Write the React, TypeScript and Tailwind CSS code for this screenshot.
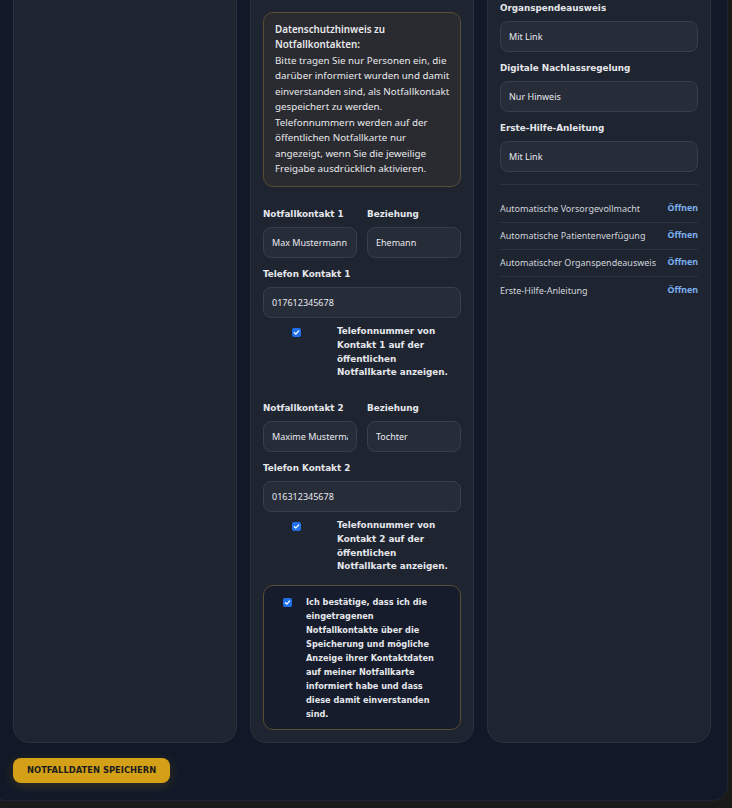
import React from "react";

const body = "font-['Noto_Sans',sans-serif]";
const dv = "font-['DejaVu_Sans',sans-serif]";

function Check() {
  return (
    <span className="flex h-[9px] w-[9px] shrink-0 items-center justify-center rounded-[2px] bg-[#1f6feb]">
      <svg width="7" height="7" viewBox="0 0 7 7">
        <path d="M1.3 3.7 L2.8 5.1 L5.7 1.9" stroke="#ffffff" strokeWidth="1.3" fill="none" strokeLinecap="round" strokeLinejoin="round" />
      </svg>
    </span>
  );
}

function Label({ children }: { children: React.ReactNode }) {
  return (
    <div className={`${dv} mb-[6px] h-[13px] whitespace-nowrap text-[8.8px] font-bold leading-[13px] text-[#e5e7eb]`}>
      {children}
    </div>
  );
}

function Input({ value }: { value: string }) {
  return (
    <input
      readOnly
      defaultValue={value}
      className={`${body} block h-[31px] w-full min-w-0 rounded-[8px] border border-[#383e4b] bg-[#272c39] px-[8px] text-[9px] text-[#e8eaee] outline-none`}
    />
  );
}

function Field({ label, value, className = "" }: { label: string; value: string; className?: string }) {
  return (
    <div className={className}>
      <Label>{label}</Label>
      <Input value={value} />
    </div>
  );
}

function PhoneConsent({ lines }: { lines: string[] }) {
  return (
    <div className="mt-[7px] flex items-start pl-[29px]">
      <div className="mt-[3px]">
        <Check />
      </div>
      <div className={`${dv} ml-[36px] text-[8.8px] font-bold leading-[13.7px] text-[#e5e7eb]`}>
        {lines.map((l, i) => (
          <div key={i} className="whitespace-nowrap">
            {l}
          </div>
        ))}
      </div>
    </div>
  );
}

function ContactSection({ n, name, rel, phone, className = "" }: { n: number; name: string; rel: string; phone: string; className?: string }) {
  return (
    <div className={className}>
      <div className="grid grid-cols-2 gap-[10px]">
        <Field label={`Notfallkontakt ${n}`} value={name} />
        <Field label="Beziehung" value={rel} />
      </div>
      <Field className="mt-[10px]" label={`Telefon Kontakt ${n}`} value={phone} />
      <PhoneConsent
        lines={["Telefonnummer von", `Kontakt ${n} auf der`, "öffentlichen", "Notfallkarte anzeigen."]}
      />
    </div>
  );
}

const card = "rounded-[16px] border border-[#2a303d] bg-[#1f2431] p-[12px]";

export default function App() {
  const noteLines = [
    "Bitte tragen Sie nur Personen ein, die",
    "darüber informiert wurden und damit",
    "einverstanden sind, als Notfallkontakt",
    "gespeichert zu werden.",
    "Telefonnummern werden auf der",
    "öffentlichen Notfallkarte nur",
    "angezeigt, wenn Sie die jeweilige",
    "Freigabe ausdrücklich aktivieren.",
  ];
  const confirmLines = [
    "Ich bestätige, dass ich die",
    "eingetragenen",
    "Notfallkontakte über die",
    "Speicherung und mögliche",
    "Anzeige ihrer Kontaktdaten",
    "auf meiner Notfallkarte",
    "informiert habe und dass",
    "diese damit einverstanden",
    "sind.",
  ];
  const links = [
    "Automatische Vorsorgevollmacht",
    "Automatische Patientenverfügung",
    "Automatischer Organspendeausweis",
    "Erste-Hilfe-Anleitung",
  ];
  return (
    <div className="h-[808px] w-[732px] overflow-hidden bg-[#1a1a1a]">
      <div className="-ml-[10px] -mt-[85px] w-[738px] rounded-b-[16px] border border-t-0 border-[#1e2433] bg-[#111827] pb-[17px] pl-[22px] pr-[17px] pt-[13px]">
        <div className="grid grid-cols-[224px_224px_224px] gap-[13px]">
          {/* column 1 */}
          <div className={card}></div>

          {/* column 2 */}
          <div className={card}>
            <div className="h-[71px]"></div>
            <div className="rounded-[10px] border border-[#5b4c33] bg-[#2a2b31] px-[11px] pb-[10px] pt-[9px]">
              <div className={`${body} text-[9.8px] leading-[15.44px] text-[#e8e8ea]`}>
                <div className="whitespace-nowrap font-semibold">Datenschutzhinweis zu</div>
                <div className="whitespace-nowrap font-semibold">Notfallkontakten:</div>
                {noteLines.map((l, i) => (
                  <div key={i} className="whitespace-nowrap">
                    {l}
                  </div>
                ))}
              </div>
            </div>
            <ContactSection className="mt-[21px]" n={1} name="Max Mustermann" rel="Ehemann" phone="017612345678" />
            <ContactSection className="mt-[22px]" n={2} name="Maxime Mustermann" rel="Tochter" phone="016312345678" />
            <div className="mt-[11px] flex items-start rounded-[10px] border border-[#5b4c33] bg-[#161c2b] pb-[8px] pl-[19px] pr-[10px] pt-[9px]">
              <div className="mt-[3px]">
                <Check />
              </div>
              <div className={`${dv} ml-[14px] text-[8.2px] font-bold leading-[14px] text-[#e5e7eb]`}>
                {confirmLines.map((l, i) => (
                  <div key={i} className="whitespace-nowrap">
                    {l}
                  </div>
                ))}
              </div>
            </div>
          </div>

          {/* column 3 */}
          <div className={card}>
            <Field label="Patientenverfügung" value="Mit Link" />
            <Field className="mt-[11px]" label="Organspendeausweis" value="Mit Link" />
            <Field className="mt-[10px]" label="Digitale Nachlassregelung" value="Nur Hinweis" />
            <Field className="mt-[10px]" label="Erste-Hilfe-Anleitung" value="Mit Link" />
            <div className="mt-[12px] border-t border-[#2c3240] pt-[11px]">
              {links.map((l, i) => (
                <div
                  key={l}
                  className={`flex h-[27px] items-center justify-between ${i < links.length - 1 ? "border-b border-[#2c3240]" : ""}`}
                >
                  <span className={`${body} text-[9px] text-[#d1d5db]`}>{l}</span>
                  <span className={`${body} text-[8.8px] font-bold text-[#7cb1f0]`}>Öffnen</span>
                </div>
              ))}
            </div>
          </div>
        </div>

        <div className="mt-[15px] flex">
          <button
            className={`${dv} h-[25px] rounded-[8px] bg-[#d4a017] px-[14px] text-[8.4px] font-bold text-[#1c1c1c] shadow-[0_3px_12px_rgba(212,160,23,0.2)]`}
          >
            NOTFALLDATEN SPEICHERN
          </button>
        </div>
      </div>
    </div>
  );
}
